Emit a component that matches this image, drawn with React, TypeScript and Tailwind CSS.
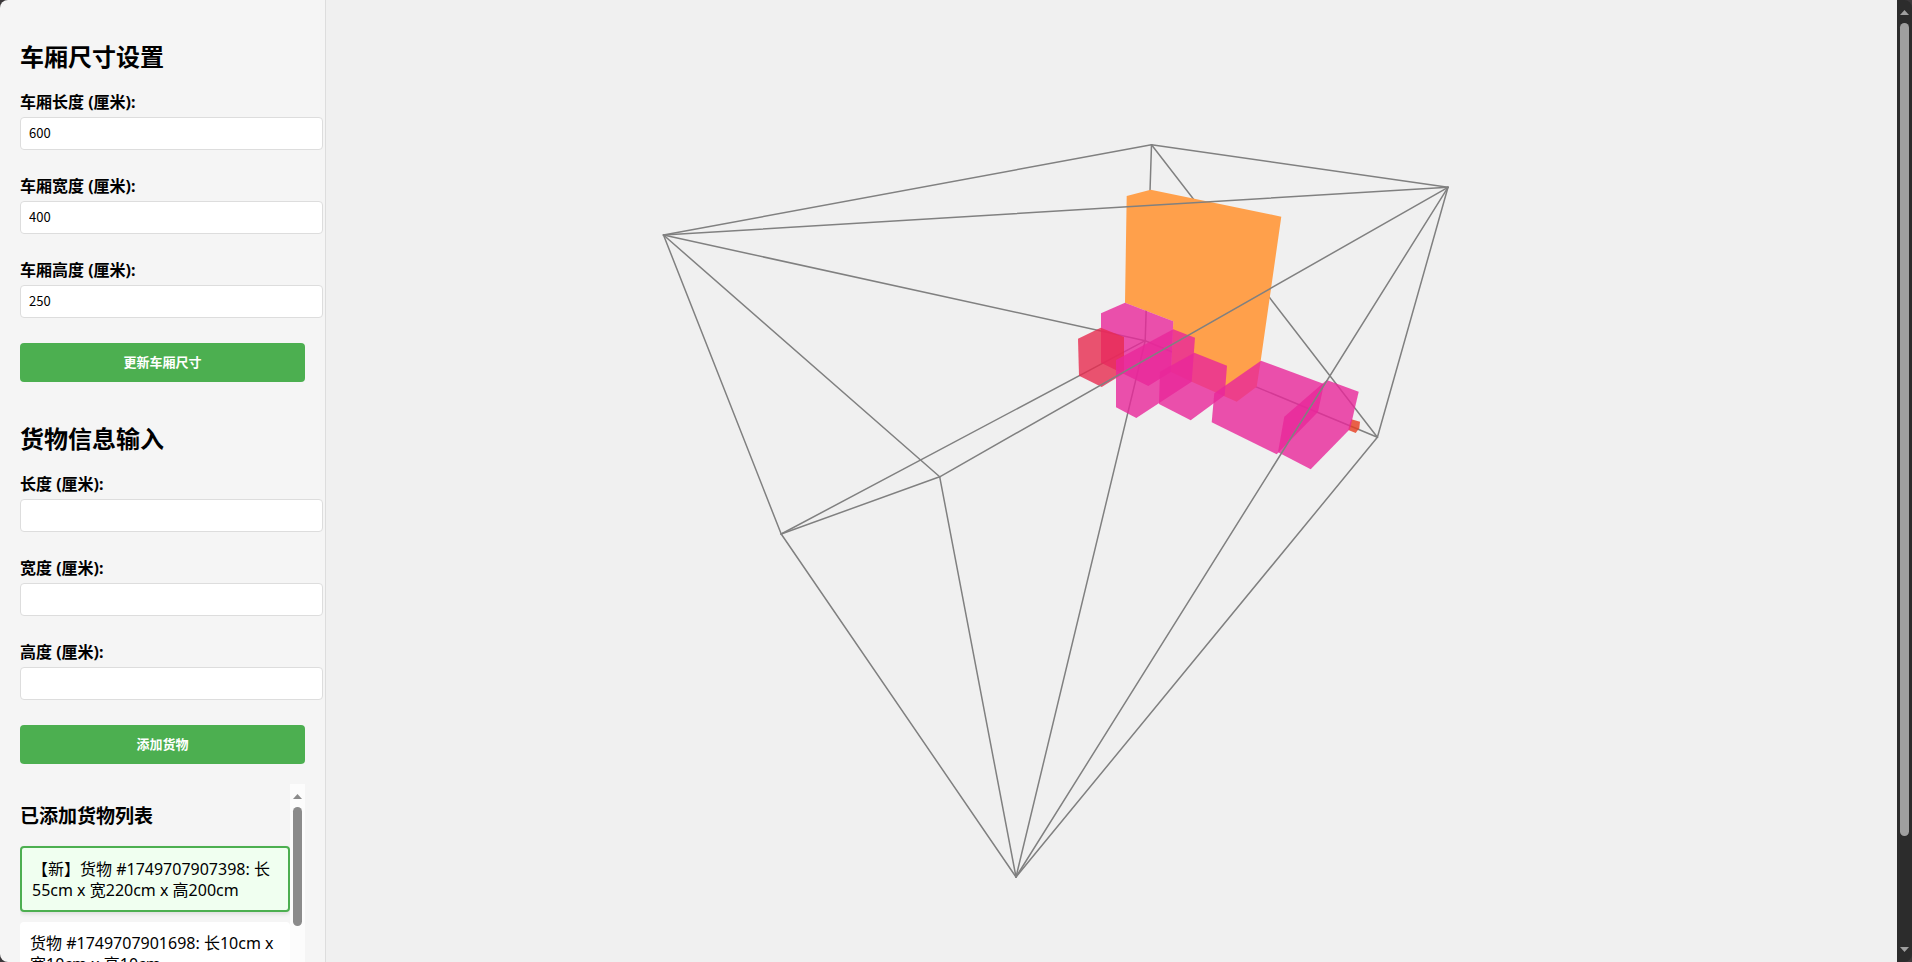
import React from "react";

type Field = { id: string; label: string; value: string };
type Point = [number, number];

const carriageFields: Field[] = [
  { id: "carriage-length", label: "车厢长度 (厘米):", value: "600" },
  { id: "carriage-width", label: "车厢宽度 (厘米):", value: "400" },
  { id: "carriage-height", label: "车厢高度 (厘米):", value: "250" },
];

const cargoFields: Field[] = [
  { id: "cargo-length", label: "长度 (厘米):", value: "" },
  { id: "cargo-width", label: "宽度 (厘米):", value: "" },
  { id: "cargo-height", label: "高度 (厘米):", value: "" },
];

const cargoItems = [
  { text: "【新】货物 #1749707907398: 长55cm x 宽220cm x 高200cm", isNew: true },
  { text: "货物 #1749707901698: 长10cm x 宽10cm x 高10cm", isNew: false },
];

// Projected corners of the carriage
const A: Point = [663.5, 235];
const B: Point = [1151.5, 144.7];
const C: Point = [1448, 187.3];
const D: Point = [1377.4, 437.3];
const E: Point = [1016, 877];
const F: Point = [939.7, 476.8];
const G: Point = [781.2, 534];
const H: Point = [1145.2, 340.7];

const backEdges: [Point, Point][] = [
  [A, B], [A, H], [A, F], [A, G], [B, C], [B, H], [B, D], [C, D],
  [D, E], [D, H], [H, E], [H, G], [G, F], [G, E], [F, E],
];
const frontEdges: [Point, Point][] = [[A, C], [C, F], [C, E]];

const PINK = "#e8279a";
const boxes = [
  { fill: PINK, points: "1101,313.3 1125,302.7 1173.3,321.3 1171,372 1148.3,386 1101,362.7" },
  { fill: "#e72a4f", points: "1078,338.7 1100.7,327.7 1124,337 1124,373.3 1101.7,387 1079,375.7" },
  { fill: PINK, points: "1116,360 1173.3,329.3 1195,337.7 1191.7,381.7 1136.3,418 1116,407.3" },
  { fill: PINK, points: "1194.3,352.7 1227,365.7 1224.7,395.3 1190.7,420.3 1159,404 1160,371.7" },
  { fill: PINK, points: "1261,360.7 1324,384 1318,412 1276.7,454.3 1211.7,422.3 1214.3,393.3" },
  { fill: "#e73c1e", points: "1351.3,419.3 1360,421.7 1359.3,428.3 1355.7,433 1348.3,430 1349.3,425" },
  { fill: PINK, points: "1326.7,380 1358.7,391.7 1350,429 1310.7,469.3 1278,452.3 1284.3,416.7" },
];

function Edges({ edges }: { edges: [Point, Point][] }) {
  return (
    <g stroke="#808080" strokeWidth="1.5" strokeLinecap="round">
      {edges.map(([p, q], i) => (
        <line key={i} x1={p[0]} y1={p[1]} x2={q[0]} y2={q[1]} />
      ))}
    </g>
  );
}

function Scene() {
  return (
    <svg className="block h-full w-full" viewBox="326 0 1571 962" role="img" aria-label="3D">
      <Edges edges={backEdges} />
      <polygon
        fill="#ffa04b"
        points="1126.7,196 1150.7,189.7 1281.3,216.7 1260.7,360.7 1256.7,386.7 1236.7,401.7 1191.7,381.7 1171,372 1173.3,321.3 1125,302.7"
      />
      {boxes.map((b) => (
        <polygon key={b.points} points={b.points} fill={b.fill} fillOpacity="0.8" />
      ))}
      <Edges edges={frontEdges} />
    </svg>
  );
}

function Section({ title, fields, action }: { title: string; fields: Field[]; action: string }) {
  return (
    <form className="mb-5" onSubmit={(e) => e.preventDefault()}>
      <h2 className="pt-[21px] pb-[19px] text-2xl leading-8 font-bold">{title}</h2>
      <div className="flex flex-col gap-[26px]">
        {fields.map((f) => (
          <div key={f.id} className="flex flex-col gap-1">
            <label htmlFor={f.id} className="text-base leading-[21px] font-bold">
              {f.label}
            </label>
            <input
              id={f.id}
              type="text"
              defaultValue={f.value}
              className="-mr-[18px] h-[33px] rounded border border-[#ddd] bg-white px-2 pb-[2px] font-['Noto_Sans_CJK_SC',sans-serif] text-[13px] outline-none"
            />
          </div>
        ))}
      </div>
      <button
        type="submit"
        className="mt-[25px] block h-[39px] w-full cursor-pointer rounded bg-[#4caf50] pb-[1px] font-['Noto_Sans_CJK_SC',sans-serif] text-[13px] font-bold text-white"
      >
        {action}
      </button>
    </form>
  );
}

function Arrow({ down = false, className }: { down?: boolean; className: string }) {
  return (
    <svg className={className} width="9" height="5" viewBox="0 0 9 5" aria-hidden="true">
      <path d={down ? "M0 0h9L4.5 5z" : "M0 5h9L4.5 0z"} fill="currentColor" />
    </svg>
  );
}

export default function App() {
  return (
    <div className="flex h-screen overflow-hidden bg-[#3b383a] font-['Noto_Sans','Noto_Sans_CJK_SC',sans-serif] text-black">
      <aside className="w-[326px] shrink-0 overflow-hidden rounded-l-lg border-r border-[#ddd] bg-[#f5f5f5] p-5">
        <Section title="车厢尺寸设置" fields={carriageFields} action="更新车厢尺寸" />
        <Section title="货物信息输入" fields={cargoFields} action="添加货物" />
        <div className="flex h-[200px] overflow-hidden">
          <div className="min-w-0 flex-1">
            <h3 className="pt-5 pb-[17px] text-[19px] leading-[25px] font-bold">已添加货物列表</h3>
            <ul className="flex flex-col gap-[10px]">
              {cargoItems.map((item) => (
                <li
                  key={item.text}
                  className={
                    item.isNew
                      ? "rounded border-2 border-[#4caf50] bg-[#f0fff0] px-[10px] pt-[11px] pb-[9px] text-base leading-[21px] shadow-[0_2px_4px_rgba(0,0,0,0.1)]"
                      : "rounded bg-white px-[10px] pt-[11px] pb-[9px] text-base leading-[21px]"
                  }
                >
                  {item.text}
                </li>
              ))}
            </ul>
          </div>
          <div className="flex w-[15px] shrink-0 flex-col items-center bg-[#fcfcfc] pt-[10px] text-[#8b8b8b]">
            <Arrow className="shrink-0" />
            <div className="mt-2 h-[119px] w-[9px] rounded-full bg-[#8b8b8b]" />
          </div>
        </div>
      </aside>
      <main className="min-w-0 flex-1 bg-[#f0f0f0]">
        <Scene />
      </main>
      <div className="flex w-[15px] shrink-0 flex-col items-center rounded-r-lg bg-[#2c2c2c] py-[10px] text-[#9f9f9f]">
        <Arrow className="shrink-0" />
        <div className="mt-2 mb-[111px] w-[9px] flex-1 rounded-full bg-[#9f9f9f]" />
        <Arrow down className="shrink-0" />
      </div>
    </div>
  );
}
